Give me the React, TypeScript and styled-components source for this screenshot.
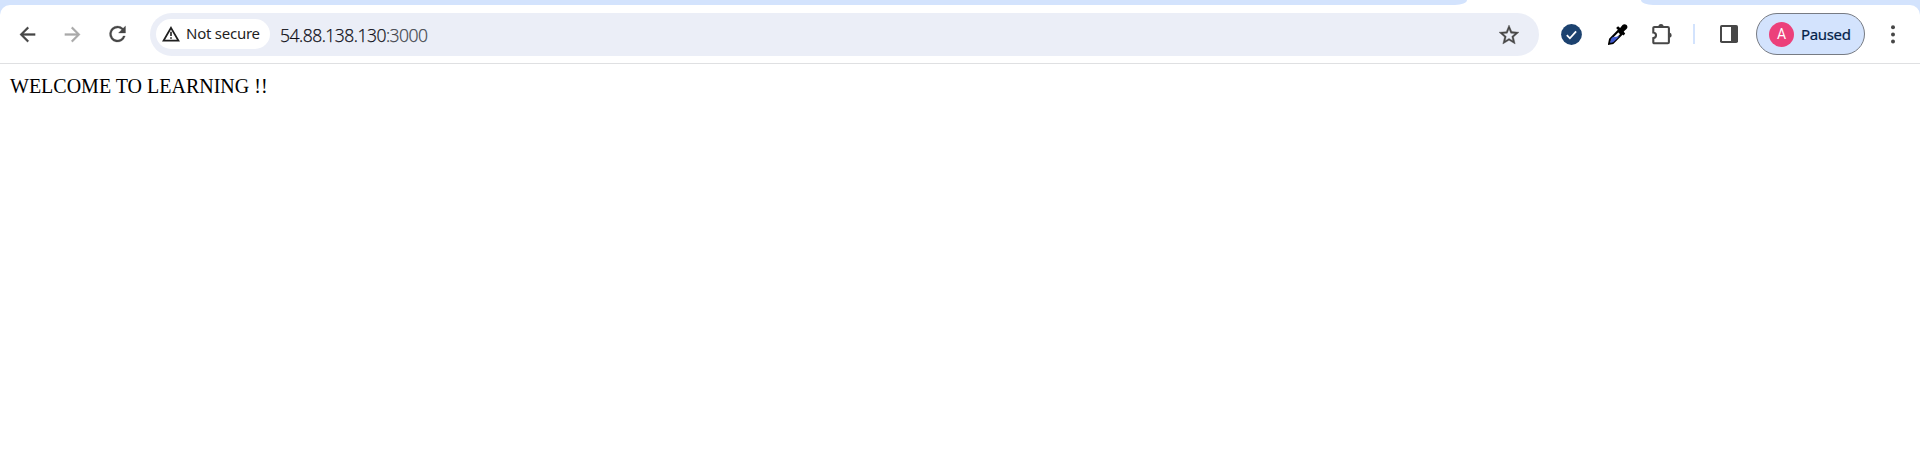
import React from "react";
import styled, { createGlobalStyle } from "styled-components";

const GlobalStyle = createGlobalStyle`
  body { margin: 0; background: #fff; }
  svg { display: block; flex: none; }
`;

const uiFont = `"Noto Sans", "Open Sans", sans-serif`;

const Browser = styled.div`
  height: 459px;
  display: flex;
  flex-direction: column;
  overflow: hidden;
  background: #fff;
`;

const TabStrip = styled.div`
  height: 5px;
  display: flex;
  background: #fff;
`;

const StripSegment = styled.div<{ $width: number; $side: "left" | "right" }>`
  width: ${(p) => p.$width}px;
  background: #d3e3fd;
  border-radius: ${(p) => (p.$side === "left" ? "0 0 12px 0 / 0 0 5px 0" : "0 0 0 12px / 0 0 0 5px")};
  margin-left: ${(p) => (p.$side === "right" ? "auto" : "0")};
`;

const ToolbarBack = styled.div`
  background: #d3e3fd;
`;

const Toolbar = styled.div`
  box-sizing: border-box;
  height: 59px;
  display: flex;
  align-items: flex-start;
  padding: 8px 16px 0 16px;
  background: #fff;
  border-bottom: 1px solid #dfe0e2;
  border-radius: 10px 10px 0 0;
`;

const IconSlot = styled.div<{ $width: number; $gap?: number }>`
  width: ${(p) => p.$width}px;
  height: 42px;
  margin-left: ${(p) => p.$gap ?? 0}px;
  display: flex;
  flex: none;
  align-items: center;
  justify-content: center;
`;

const AddressBar = styled.div`
  box-sizing: border-box;
  width: 1389px;
  height: 43px;
  margin-left: 20px;
  padding: 0 18px 0 6px;
  display: flex;
  align-items: center;
  flex: none;
  background: #ebeef7;
  border-radius: 22px;
`;

const SecurityChip = styled.div`
  box-sizing: border-box;
  width: 114px;
  height: 30px;
  margin-bottom: 1px;
  padding-left: 6px;
  display: flex;
  align-items: center;
  gap: 6px;
  border-radius: 15px;
  background: #fff;
  color: #1f1f1f;
  font: 400 15px/28px ${uiFont};
  letter-spacing: -0.25px;
  white-space: nowrap;
`;

const ChipLabel = styled.span`
  padding-bottom: 2px;
`;

const Url = styled.div`
  margin-left: 10px;
  flex: 1;
  color: #101018;
  font: 300 17.5px/24px "Open Sans", "Noto Sans", sans-serif;
  letter-spacing: -0.5px;
  -webkit-text-stroke: 0.25px currentColor;
  white-space: nowrap;
`;

const Port = styled.span`
  color: #42454d;
  -webkit-text-stroke: 0.25px currentColor;
`;

const Separator = styled.div`
  width: 2px;
  height: 20px;
  margin: 11px 0 0 20px;
  flex: none;
  background: #d3e3fd;
`;

const Profile = styled.div`
  box-sizing: border-box;
  width: 109px;
  height: 42px;
  margin-left: 18px;
  padding-left: 12px;
  display: flex;
  align-items: center;
  gap: 7px;
  flex: none;
  border: 1px solid #777b83;
  border-radius: 21px;
  background: #d3e3fd;
  color: #041e49;
  font: 400 15px/22px ${uiFont};
  letter-spacing: -0.35px;
  -webkit-text-stroke: 0.2px currentColor;
`;

const Avatar = styled.div`
  width: 25px;
  height: 25px;
  border-radius: 50%;
  background: #ec407a;
  color: #fff;
  text-align: center;
  font: 400 14px/25px Roboto, sans-serif;
  -webkit-text-stroke: 0;
`;

const Page = styled.main`
  padding: 11px 10px;
  color: #000;
  font: 20px/23px "Liberation Serif", "Times New Roman", serif;
`;

const ArrowIcon = ({ forward = false }: { forward?: boolean }) => (
  <svg width="23" height="23" viewBox="0 0 24 24" fill={forward ? "#aaaaaa" : "#474747"} stroke={forward ? "#aaaaaa" : "#474747"} strokeWidth="0.3">
    <path
      transform={forward ? "matrix(-1 0 0 1 24 0)" : undefined}
      d="M20 11H7.83l5.59-5.59L12 4l-8 8 8 8 1.41-1.41L7.83 13H20v-2z"
    />
  </svg>
);

const ReloadIcon = () => (
  <svg width="24" height="24" viewBox="0.5 0 24 24" fill="#474747" stroke="#474747" strokeWidth="0.3">
    <path d="M17.65 6.35A7.96 7.96 0 0 0 12 4a8 8 0 1 0 7.73 10h-2.08A6 6 0 1 1 12 6c1.66 0 3.14.69 4.22 1.78L13 11h7V4l-2.35 2.35z" />
  </svg>
);

const WarningIcon = () => (
  <svg width="18" height="16" viewBox="0 0 18 16" fill="none" stroke="#1f1f1f">
    <path d="M9 1.9 16.4 14.6H1.6z" strokeWidth="1.8" />
    <path d="M9 5.7v4.4M9 11.2v1.6" strokeWidth="1.6" />
  </svg>
);

const StarIcon = () => (
  <svg width="24" height="24" viewBox="0 0 24 24" fill="#474747" stroke="#474747" strokeWidth="0.35">
    <path d="m22 9.24-7.19-.62L12 2 9.19 8.63 2 9.24l5.46 4.73L5.82 21 12 17.27 18.18 21l-1.63-7.03L22 9.24zM12 15.4l-3.76 2.27 1-4.28-3.32-2.88 4.38-.38L12 6.1l1.71 4.04 4.38.38-3.32 2.88 1 4.28L12 15.4z" />
  </svg>
);

const CheckIcon = () => (
  <svg width="21" height="21" viewBox="0 0 21 21">
    <circle cx="10.5" cy="10.5" r="10.4" fill="#1c426f" />
    <path d="m5.8 11.2 3.1 3.1 6.2-6.9" fill="none" stroke="#fff" strokeWidth="1.8" />
  </svg>
);

const DropperIcon = () => (
  <svg width="20" height="21" viewBox="0 0 20 21">
    <path d="M10.4 6.8 2.1 15.2 1.2 19.6 4.8 18.9 13.5 10.2z" fill="#fff" stroke="#000" strokeWidth="2.2" />
    <path d="m4.5 13.3 7-1-6.3 6-3 .6.7-3.9z" fill="#4059d0" />
    <path d="m8.1 4 2-1.7 2 1.8 2.4-3c1.2-1.4 3-1.1 4.1 0 1.1 1.2 1.2 2.8-.1 4l-2.8 2.5 1.5 2.1-1.8 1.7z" fill="#000" />
  </svg>
);

const PuzzleIcon = () => (
  <svg width="21" height="21" viewBox="0 0 21 21">
    <path
      d="M2.5 3h13.2q1.2 0 1.2 1.2v14q0 1.1-1.2 1.1H2.4q-1.1 0-1.1-1.1v-4.1c3.6-.5 3.6-5.1 0-5.6V4.2Q1.3 3 2.5 3z"
      fill="none"
      stroke="#474747"
      strokeWidth="2.1"
    />
    <path d="M6.4 2.7a2.6 2.6 0 0 1 5.2 0zM17.5 8.5a2.7 2.7 0 0 1 0 5.3z" fill="#474747" />
  </svg>
);

const SidePanelIcon = () => (
  <svg width="18" height="18" viewBox="0 0 18 18">
    <rect width="18" height="18" rx="1.8" fill="#474747" />
    <path d="M2 2h9v14H2z" fill="#fff" />
  </svg>
);

const MenuIcon = () => (
  <svg width="4" height="19" viewBox="0 0 4 19" fill="#474747">
    <circle cx="2" cy="2.3" r="2" />
    <circle cx="2" cy="9.4" r="2" />
    <circle cx="2" cy="16.4" r="2" />
  </svg>
);

export default function App() {
  return (
    <Browser>
      <GlobalStyle />
      <TabStrip>
        <StripSegment $width={1467} $side="left" />
        <StripSegment $width={279} $side="right" />
      </TabStrip>
      <ToolbarBack>
        <Toolbar>
          <IconSlot $width={23}><ArrowIcon /></IconSlot>
          <IconSlot $width={23} $gap={22}><ArrowIcon forward /></IconSlot>
          <IconSlot $width={24} $gap={22}><ReloadIcon /></IconSlot>
          <AddressBar>
            <SecurityChip>
              <WarningIcon />
              <ChipLabel>Not secure</ChipLabel>
            </SecurityChip>
            <Url>54.88.138.130<Port>:3000</Port></Url>
            <StarIcon />
          </AddressBar>
          <IconSlot $width={21} $gap={22}><CheckIcon /></IconSlot>
          <IconSlot $width={20} $gap={26}><DropperIcon /></IconSlot>
          <IconSlot $width={21} $gap={24}><PuzzleIcon /></IconSlot>
          <Separator />
          <IconSlot $width={18} $gap={25}><SidePanelIcon /></IconSlot>
          <Profile>
            <Avatar>A</Avatar>
            Paused
          </Profile>
          <IconSlot $width={4} $gap={26}><MenuIcon /></IconSlot>
        </Toolbar>
      </ToolbarBack>
      <Page>WELCOME TO LEARNING !!</Page>
    </Browser>
  );
}
